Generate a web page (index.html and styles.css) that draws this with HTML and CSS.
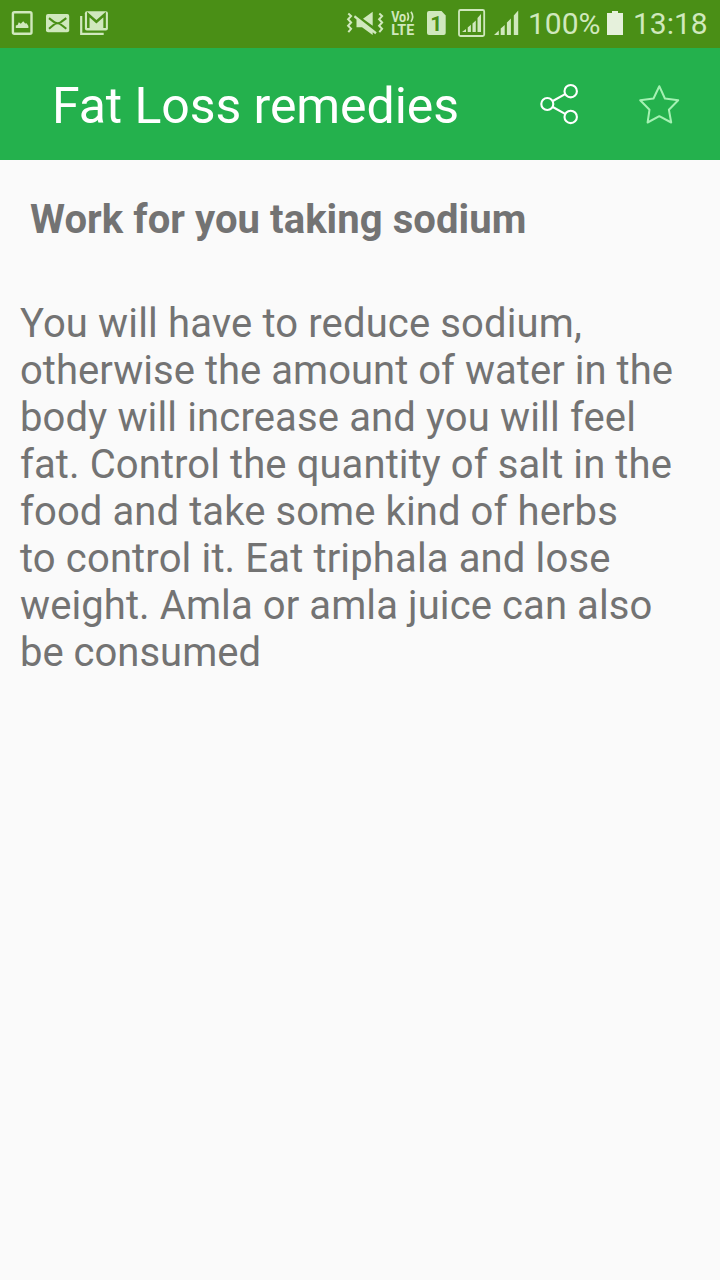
FILE: index.html
```html
<!DOCTYPE html>
<html lang="en">
<head>
<meta charset="utf-8">
<title>Fat Loss remedies</title>
<link rel="stylesheet" href="styles.css">
</head>
<body>
<div class="status">
  <div class="status-group">
    <svg class="icon" width="40" height="48" viewBox="0 0 40 48"><rect x="12.900" y="12.200" width="18.600" height="21.600" rx="1.500" fill="none" stroke="currentColor" stroke-width="2.400"/><path d="M15.800 28v-2.400l1.800-.7 1.200-2.700 2 1.600 2.400-2.600 2 2.400 1.400-.3 1.800 2.700v2z" fill="currentColor"/></svg>
    <svg class="icon" width="36" height="48" viewBox="40 0 36 48"><rect x="46" y="14" width="23.200" height="18.200" rx="2" fill="currentColor"/><path d="M49 18.200l4.500 3.500q2 1.600 4 1.600t4-1.600l4.800-3.500M49 28.800l4.500-3.800q2-1.700 4-1.700t4 1.700l4.800 3.800" fill="none" class="cut" stroke-width="2.100"/></svg>
    <svg class="icon" width="40" height="48" viewBox="76 0 40 48"><path d="M81.200 16v17.800h22.500" fill="none" stroke="currentColor" stroke-width="2.200"/><rect x="84.900" y="11.200" width="23" height="19.300" rx="2" fill="currentColor"/><path d="M88.300 28V14.500l8.100 7.300 8.200-7.300V28" fill="none" class="cut" stroke-width="2.500"/></svg>
  </div>
  <div class="status-group">
    <svg class="icon" width="44" height="48" viewBox="344 0 44 48"><path d="M348.300 13.500l2.800 2.600-3 3.200 3 3.200-3 3.200 3 3.200-2.800 3.300M379.300 13.500l2.800 2.600-3 3.200 3 3.200-3 3.200 3 3.200-2.800 3.300" fill="none" stroke="currentColor" stroke-width="2"/><path d="M363 18.700l9.700-7v14.100zM355 15.200l21.700 17.100-1.400 1.900-2.600-1.900v2.600l-10.700-7.700h-5.500v-7.600l-2.700-2.300z" fill="currentColor"/></svg>
    <svg class="icon volte" width="36" height="48" viewBox="388 0 36 48"><text x="391.200" y="21.500" textLength="15" lengthAdjust="spacingAndGlyphs">Vo</text><path d="M407.300 12.700q2.300 4 0 8M411 11.800q3.300 5 0 10" fill="none" stroke="currentColor" stroke-width="1.700"/><text x="391.200" y="35" textLength="23" lengthAdjust="spacingAndGlyphs">LTE</text></svg>
    <svg class="icon sim" width="28" height="48" viewBox="424 0 28 48"><path d="M429 11h12.500l4.200 4.500V33q0 2-2 2H429q-2 0-2-2V13q0-2 2-2z" fill="currentColor"/><text x="436.200" y="30.800" text-anchor="middle">1</text></svg>
    <svg class="icon" width="36" height="48" viewBox="452 0 36 48"><rect x="459" y="10" width="25.200" height="26" rx="1.500" fill="none" stroke="currentColor" stroke-width="1.800"/><path d="M462 32l4-3v3zM467.700 27.500l3.200-2.800V32h-3.200zM472.500 23.500l3.300-3V32h-3.300zM477.500 18l3.500-4v18h-3.500z" fill="currentColor"/></svg>
    <svg class="icon" width="40" height="48" viewBox="488 0 40 48"><path d="M494 35l4.800-4.500V35zM500.700 28.500l4-3.500v10h-4zM506.900 22.500l4-3.900V35h-4zM513.800 15.500l4.400-5V35h-4.400z" fill="currentColor"/></svg>
    <span class="battery-level">100%</span>
    <svg class="icon battery" width="30" height="48" viewBox="603 0 30 48"><path d="M607 13h5v-2h6v2h5v22h-16z" fill="currentColor"/></svg>
    <span class="clock">13:18</span>
  </div>
</div>
<header class="toolbar">
  <h1 class="toolbar-title">Fat Loss remedies</h1>
  <div class="actions">
    <svg width="100" height="112" viewBox="509 48 100 112"><g fill="none" stroke="#fff" stroke-width="2.100"><circle cx="547.300" cy="104" r="6"/><circle cx="570.700" cy="91.200" r="6.200"/><circle cx="570.700" cy="116.900" r="6.200"/><path d="M552.800 101l12.300-6.800M552.800 107l12.300 6.800"/></g></svg>
    <svg width="100" height="112" viewBox="609 48 100 112"><path class="star" d="M659.300 86.200l5.600 12.300 13.300 1.800-9.300 9.400 2.300 12.800-11.900-6.300-11.700 6.300 1.900-12.800-9.300-9.400 13.300-1.800z"/></svg>
  </div>
</header>
<main class="content">
  <h2 class="heading">Work for you taking sodium</h2>
  <p class="text">
    <span class="line wide">You will have to reduce sodium,</span>
    <span class="line slight">otherwise the amount of water in the</span>
    <span class="line wide">body will increase and you will feel</span>
    <span class="line medium">fat. Control the quantity of salt in the</span>
    <span class="line medium">food and take some kind of herbs</span>
    <span class="line wide">to control it. Eat triphala and lose</span>
    <span class="line medium">weight. Amla or amla juice can also</span>
    <span class="line">be consumed</span>
  </p>
</main>
</body>
</html>
```
FILE: styles.css
```css
body {
  margin: 0;
  min-height: 1280px;
  background: #fafafa;
  font-family: Roboto, "Liberation Sans", sans-serif;
}
svg {
  display: block;
  flex: none;
}
.status {
  display: flex;
  justify-content: space-between;
  height: 48px;
  padding-right: 12px;
  background: #4a8f16;
  color: #d0e8bd;
}
.status-group {
  display: flex;
}
.cut {
  stroke: #4a8f16;
}
.volte text {
  font-size: 14px;
  font-weight: 700;
  fill: currentColor;
}
.sim text {
  font-size: 21px;
  font-weight: 700;
  fill: #4a8f16;
}
.battery-level,
.clock {
  font-size: 30px;
  line-height: 47px;
  white-space: nowrap;
}
.battery-level {
  width: 75px;
}
.battery {
  color: #e6f1dc;
}
.clock {
  width: 75px;
}
.toolbar {
  display: flex;
  justify-content: space-between;
  height: 112px;
  padding: 0 11px 0 52px;
  background: #24b14d;
  color: #fff;
}
.toolbar-title {
  margin: 0;
  font-size: 50px;
  font-weight: 400;
  line-height: 117px;
  letter-spacing: -0.08px;
  white-space: nowrap;
}
.actions {
  display: flex;
}
.star {
  fill: none;
  stroke: #a5f1b3;
  stroke-width: 2;
  stroke-linejoin: round;
}
.content {
  padding: 36px 20px;
  color: #737373;
}
.heading {
  margin: 0 0 57px 10px;
  font-size: 40px;
  line-height: 47px;
  font-weight: 700;
  letter-spacing: 0.07px;
  white-space: nowrap;
}
.text {
  margin: 0;
  font-size: 40px;
  line-height: 47px;
  white-space: nowrap;
}
.line {
  display: block;
}
.slight {
  letter-spacing: 0.03px;
}
.medium {
  letter-spacing: 0.09px;
}
.wide {
  letter-spacing: 0.14px;
}
```
